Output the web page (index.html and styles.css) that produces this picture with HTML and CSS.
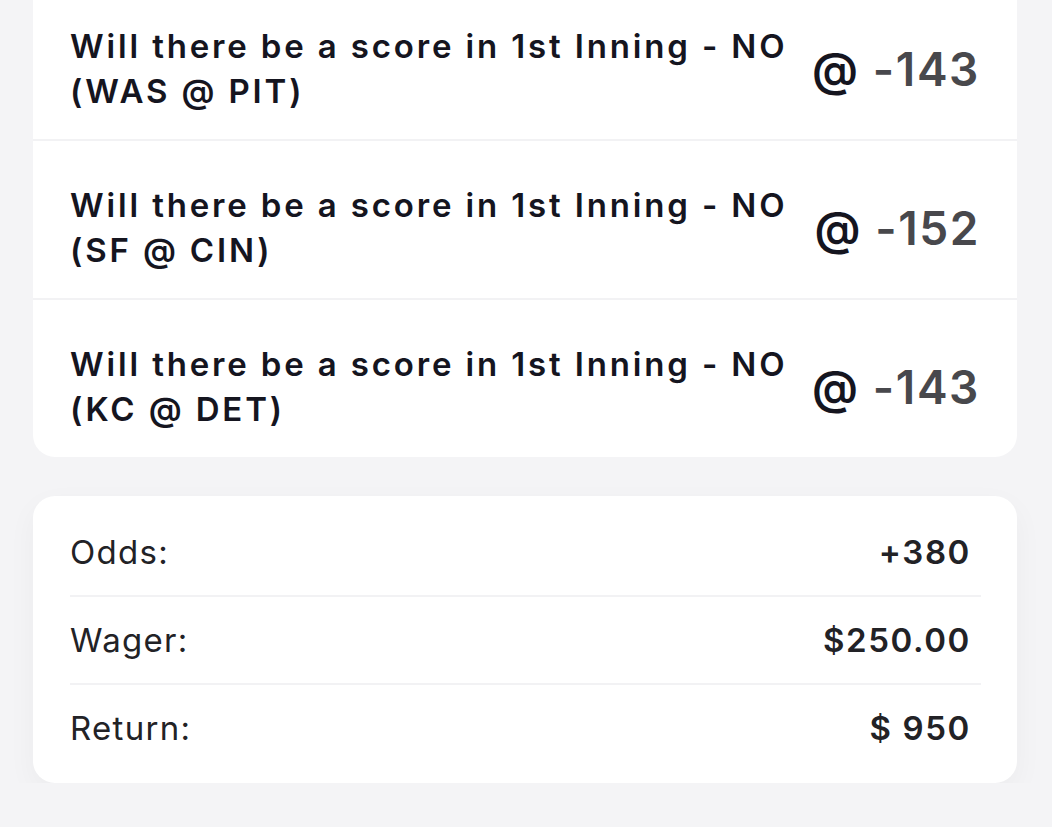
FILE: index.html
```html
<!DOCTYPE html>
<html>
<head>
<meta charset="utf-8">
<link rel="stylesheet" href="styles.css">
</head>
<body>
<div class="page">
  <div class="card legs">
    <div class="leg">
      <div class="leg-title">Will there be a score in 1st Inning - NO<br>(WAS @ PIT)</div>
      <div class="leg-odds"><span class="at">@</span> <span class="price">-143</span></div>
    </div>
    <div class="leg">
      <div class="leg-title">Will there be a score in 1st Inning - NO<br>(SF @ CIN)</div>
      <div class="leg-odds"><span class="at">@</span> <span class="price">-152</span></div>
    </div>
    <div class="leg">
      <div class="leg-title">Will there be a score in 1st Inning - NO<br>(KC @ DET)</div>
      <div class="leg-odds"><span class="at">@</span> <span class="price">-143</span></div>
    </div>
  </div>
  <div class="card summary">
    <div class="sum-row"><span class="label">Odds:</span><span class="value">+380</span></div>
    <div class="sum-row"><span class="label">Wager:</span><span class="value">$250.00</span></div>
    <div class="sum-row"><span class="label">Return:</span><span class="value">$ 950</span></div>
  </div>
</div>
</body>
</html>
```
FILE: styles.css
```css
html, body {
  margin: 0;
  padding: 0;
  background: #f4f4f6;
  font-family: Inter, "Noto Sans", sans-serif;
  color: #15151f;
}
.page {
  display: flex;
  flex-direction: column;
  gap: 39px;
  padding: 0 35px 0 33px;
}
.card {
  background: #ffffff;
  border-radius: 22px;
}
.legs {
  margin-top: -18px;
  border-radius: 0 0 22px 22px;
}
.leg {
  display: flex;
  align-items: center;
  justify-content: space-between;
  padding: 42px 39px 25px 37px;
  border-bottom: 2px solid #f2f2f4;
}
.leg:last-child {
  border-bottom: none;
}
.leg-title {
  font-size: 33px;
  font-weight: 600;
  line-height: 45px;
  letter-spacing: 2.85px;
  color: #15151f;
}
.leg-odds {
  font-size: 46px;
  font-weight: 600;
  letter-spacing: 1.6px;
  white-space: nowrap;
  margin-right: -2px;
}
.leg-odds .at {
  color: #15151f;
}
.leg-odds .price {
  color: #48484c;
}
.summary {
  padding: 13px 36px 12px 37px;
  box-shadow: 0 10px 30px rgba(0, 0, 0, 0.04);
}
.sum-row {
  display: flex;
  justify-content: space-between;
  align-items: center;
  height: 86px;
  border-bottom: 2px solid #f2f2f4;
  font-size: 33px;
  letter-spacing: 1.3px;
  padding-right: 10px;
}
.sum-row:last-child {
  border-bottom: none;
}
.label {
  font-weight: 400;
  color: #222226;
}
.value {
  font-weight: 600;
  color: #222226;
  letter-spacing: 1.6px;
}
```
